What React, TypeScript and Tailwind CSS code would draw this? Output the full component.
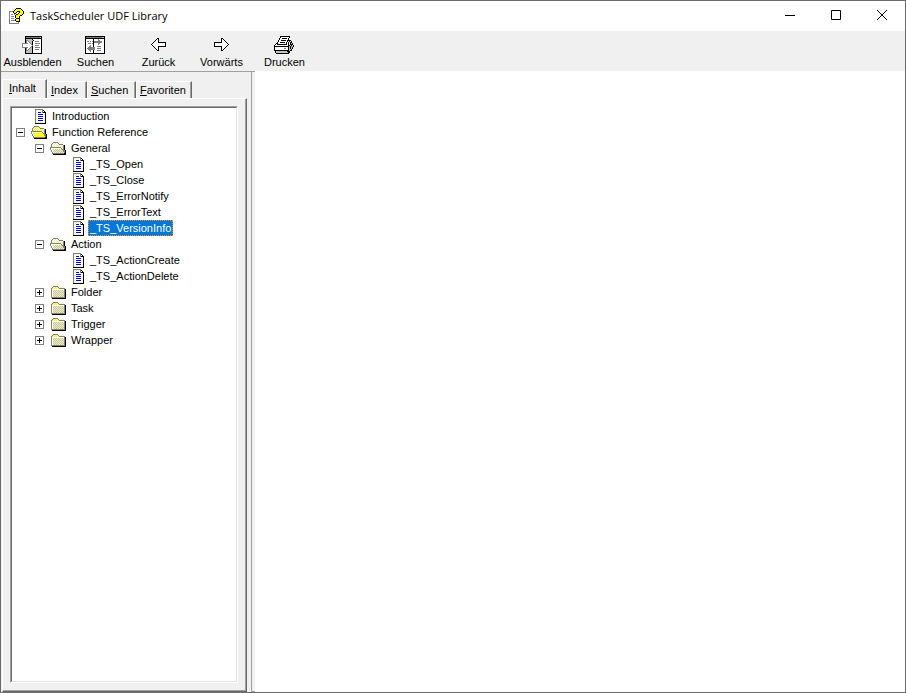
import type { ReactNode } from "react";

const PALETTE: Record<string, string> = {
  k: "#000000",
  g: "#808080",
  s: "#c0c0c0",
  w: "#ffffff",
  y: "#ffff00",
  b: "#0000ff",
  c: "#f4f4a0",
};

function PixelIcon({ rows }: { rows: string[] }) {
  const width = Math.max(...rows.map((r) => r.length));
  return (
    <svg
      width={width}
      height={rows.length}
      viewBox={`0 0 ${width} ${rows.length}`}
      shapeRendering="crispEdges"
      className="block shrink-0"
      aria-hidden="true"
    >
      {rows.flatMap((row, y) =>
        [...row].map((c, x) =>
          PALETTE[c] ? <rect key={`${x}-${y}`} x={x} y={y} width="1" height="1" fill={PALETTE[c]} /> : null,
        ),
      )}
    </svg>
  );
}

const PAGE = [
  "gggggggg....",
  "gcwcwcwgk...",
  "gwwwwwwgwk..",
  "gcwbbbwgkkk.",
  "gwwwwwwwwwk.",
  "gcwbbbbbwck.",
  "gwwwwwwwwwk.",
  "gcwbbbbbwck.",
  "gwwwwwwwwwk.",
  "gcwbbbbbwck.",
  "gwwwwwwwwwk.",
  "gcwbbbbbwck.",
  "gwwwwwwwwwk.",
  "gcwcwcwcwck.",
  "kkkkkkkkkkk.",
];

const FOLDER = [
  "..ggggg........",
  ".gywywyg.......",
  "gywywywygggggg.",
  "gwwwwwwwwwwwwgk",
  "gwcscscscscscgk",
  "gwscscscscscsgk",
  "gwcscscscscscgk",
  "gwscscscscscsgk",
  "gwcscscscscscgk",
  "gwscscscscscsgk",
  "gwcscscscscscgk",
  "ggggggggggggggk",
  ".kkkkkkkkkkkkkk",
];

const OPEN_FOLDER = [
  "...ggggg........",
  "..gcwcwcg.......",
  ".gcwcwcwcgggg...",
  ".gwcwcwcwcwcwgk.",
  ".gcwcwcwcwcwcgk.",
  "gggggggggggwcgk.",
  "gwwwwwwwwwwgwgk.",
  "gwcscscscscsggk.",
  ".gwcscscscscsggk",
  ".gwscscscscscggk",
  "..gwscscscscscgk",
  "..ggggggggggggkk",
  "...kkkkkkkkkkkkk",
];

const BRIGHT_FOLDER = OPEN_FOLDER.map((r) => r.replace(/[sc]/g, "y"));

const HELP = [
  ".......kkkkk...",
  "......kyyyyyk..",
  ".....kyyyyyyyk.",
  "ggggkyyykkkyyyk",
  "gwwwkyyk..kyyyk",
  "gwwwwkk..kyyyyk",
  "gwggwgwkkyyyyk.",
  "gwwwwwkyyyykk..",
  "gwgggwkyyyk....",
  "gwwwwwkyyyk....",
  "gwgggwwkkkk....",
  "gwwwwwkyyyk....",
  "gwggggkyyyk....",
  "gwwwwwwkkkk....",
  "gwwwwwwwwg.....",
  "gggggggggg.....",
];

const HIDE = [
  "...kkkkkkkkkkkkkkkkk",
  "...kggggggggggggggsk",
  "...kkkkkkkkkkkkkkkkk",
  "...ksssssskwwwwwwwwk",
  "...kggssssskwwwwwwwk",
  "...kgwgssskwwggggwwk",
  "...kgwwgsskwwwwwwwwk",
  "ggggggwwgskwwgggggwk",
  "gwwwwwwwwgkwwwwwwwwk",
  "gwwwwwwwwwgwwggggwwk",
  "gwwwwwwwwgkwwwwwwwwk",
  "ggggggwwgskwwgggggwk",
  "...kgwwgsskwwwwwwwwk",
  "...kgwgssskwwggggwwk",
  "...kggsssskwwwwwwwwk",
  "...ksssssskwwwwwwwwk",
  "...ksssssskwwwwwwwwk",
  "...kkkkkkkkkkkkkkkkk",
];

const SYNC = [
  "kkkkkkkkkkkkkkkkkkkk",
  "kggggggggggggggggssk",
  "kkkkkkkkkkkkkkkkkkkk",
  "kwwwwwwwkwwwwgwwwwwk",
  "kwwwwwwwkwwwwggwwwwk",
  "kwggwgwgkggggggggwwk",
  "kwwwwwwwkggggggggwwk",
  "kwwgggwgkwwwwggwwwwk",
  "kwwwwwwwkwwwwgwwwwwk",
  "kwwwwgwwkwwwwwwwwwwk",
  "kwwwggwwkwwwggggwwwk",
  "kwwgggggggwwwwwwwwwk",
  "kwggggggggwwggggwwwk",
  "kwwgggggggwwwwwwwwwk",
  "kwwwggwwkwwwggggwwwk",
  "kwwwwgwwkwwwwwwwwwwk",
  "kwwwwwwwkwwwwwwwwwwk",
  "kkkkkkkkkkkkkkkkkkkk",
];

const BACK = [
  "......kk.......",
  ".....kwk.......",
  "....kwwk.......",
  "...kwwwk.......",
  "..kwwwwkkkkkkkk",
  ".kwwwwwwwwwwwwk",
  "kwwwwwwwwwwwwwk",
  ".kwwwwwwwwwwwwk",
  "..kwwwwkkkkkkkk",
  "...kwwwk.......",
  "....kwwk.......",
  ".....kwk.......",
  "......kk.......",
];

const FORWARD = BACK.map((r) => [...r].reverse().join(""));

const PRINT = [
  "......kkkkkkkkkk....",
  "......kwwwwwwwwk....",
  ".....kwwkkkkkwk.....",
  ".....kwwwwwwwwk.....",
  "....kwwkkkkkwkkkk...",
  "....kwwwwwwwwkwkwk..",
  "...kwwkkkkkwkwkwkk..",
  "..kkwwwwwwwwkwkwksk.",
  ".kwkkkkkkkkkkwkwkkk.",
  "kwwwwwwwwwwwwwkksksk",
  "kkkkkkkkkkkkkkkskssk",
  "kwwwwwwwwwwwwwksksk.",
  "kwwwwwwwwwggwwksksk.",
  "kwwwwwwwwwwwwwkssk..",
  "kkkkkkkkkkkkkkkskk..",
  ".kssssssssssskkk....",
  ".ksssssssssssskk....",
  "..kkkkkkkkkkkkk.....",
];

type Node = { label: string; level: number; kind: "page" | "folder" | "open" | "bright"; selected?: boolean };

const NODES: Node[] = [
  { label: "Introduction", level: 0, kind: "page" },
  { label: "Function Reference", level: 0, kind: "bright" },
  { label: "General", level: 1, kind: "open" },
  { label: "_TS_Open", level: 2, kind: "page" },
  { label: "_TS_Close", level: 2, kind: "page" },
  { label: "_TS_ErrorNotify", level: 2, kind: "page" },
  { label: "_TS_ErrorText", level: 2, kind: "page" },
  { label: "_TS_VersionInfo", level: 2, kind: "page", selected: true },
  { label: "Action", level: 1, kind: "open" },
  { label: "_TS_ActionCreate", level: 2, kind: "page" },
  { label: "_TS_ActionDelete", level: 2, kind: "page" },
  { label: "Folder", level: 1, kind: "folder" },
  { label: "Task", level: 1, kind: "folder" },
  { label: "Trigger", level: 1, kind: "folder" },
  { label: "Wrapper", level: 1, kind: "folder" },
];

const INDENT = ["pl-1", "pl-[23px]", "pl-[42px]"];
const ICONS = { page: PAGE, folder: FOLDER, open: OPEN_FOLDER, bright: BRIGHT_FOLDER };

function TreeRow({ node }: { node: Node }) {
  const expanded = node.kind !== "folder";
  return (
    <li
      role="treeitem"
      aria-selected={!!node.selected}
      aria-expanded={node.kind === "page" ? undefined : expanded}
      className={`flex h-4 items-center ${INDENT[node.level]}`}
    >
      {node.kind === "page" ? (
        <span className="w-[9px]" />
      ) : (
        <button type="button" aria-label={`${expanded ? "Collapse" : "Expand"} ${node.label}`}>
          <svg width="9" height="9" viewBox="0 0 9 9" shapeRendering="crispEdges" className="block">
            <path d="M0.5 0.5h8v8h-8z" fill="#fff" stroke="#808080" />
            <path d={expanded ? "M2 4.5h5" : "M2 4.5h5M4.5 2v5"} stroke="#000" />
          </svg>
        </button>
      )}
      <span className="ml-1.5 flex w-[19px] justify-start">
        <span className={node.kind === "page" ? "pl-1" : node.kind === "folder" ? "pl-px" : ""}>
          <PixelIcon rows={ICONS[node.kind]} />
        </span>
      </span>
      <button
        type="button"
        className={`h-4 px-0.5 leading-4 whitespace-nowrap ${
          node.selected
            ? "bg-[#0078d7] text-white outline-1 -outline-offset-1 outline-dotted outline-[#ff8728]"
            : ""
        }`}
      >
        {node.label}
      </button>
    </li>
  );
}

function ToolButton({ label, rows }: { label: string; rows: string[] }) {
  return (
    <button type="button" className="flex w-[63px] flex-col items-center justify-start pb-px">
      <span className="flex h-[23px] items-center pt-1 pr-px">
        <PixelIcon rows={rows} />
      </span>
      <span className="leading-4">{label}</span>
    </button>
  );
}

function Tab({ label, width, active }: { label: string; width: string; active?: boolean }) {
  return (
    <button
      type="button"
      role="tab"
      aria-selected={!!active}
      className={`flex border-t border-r border-l border-t-white border-r-[#696969] border-l-white bg-[#f0f0f0] leading-4 shadow-[inset_-1px_0_0_#a0a0a0] ${width} ${
        active ? "-mb-px h-5 pl-1.5" : "h-[17px] pl-[3px]"
      }`}
    >
      <span>
        <u className="underline-offset-1">{label[0]}</u>
        {label.slice(1)}
      </span>
    </button>
  );
}

function CaptionButton({ label, children }: { label: string; children: ReactNode }) {
  return (
    <button type="button" aria-label={label} className="flex w-[46px] items-center justify-center pb-px pl-px">
      <svg width="11" height="11" viewBox="0 0 11 11" fill="none" stroke="#000">
        {children}
      </svg>
    </button>
  );
}

export default function App() {
  return (
    <div className="flex h-screen flex-col border border-[#6b6b6b] bg-white font-['Liberation_Sans',Arial,sans-serif] text-[11px] text-black">
      <header className="flex h-[30px] shrink-0 justify-between">
        <div className="flex items-center gap-1.5 pb-px pl-2">
          <PixelIcon rows={HELP} />
          <h1 className="font-['Open_Sans','Noto_Sans',sans-serif] text-[11px] leading-4">TaskScheduler UDF Library</h1>
        </div>
        <div className="flex">
          <CaptionButton label="Minimize">
            <path d="M0 5.5h10" />
          </CaptionButton>
          <CaptionButton label="Maximize">
            <path d="M0.5 0.5h9v9h-9z" />
          </CaptionButton>
          <CaptionButton label="Close">
            <path d="M0 0l10 10M10 0l-10 10" />
          </CaptionButton>
        </div>
      </header>

      <nav className="flex h-10 shrink-0 bg-[#f0f0f0]" aria-label="Toolbar">
        <ToolButton label="Ausblenden" rows={HIDE} />
        <ToolButton label="Suchen" rows={SYNC} />
        <ToolButton label="Zurück" rows={BACK} />
        <ToolButton label="Vorwärts" rows={FORWARD} />
        <ToolButton label="Drucken" rows={PRINT} />
      </nav>

      <div className="flex min-h-0 flex-1">
        <aside className="flex w-[254px] shrink-0 border-t border-[#a0a0a0] bg-[#f0f0f0]">
          <div className="flex flex-1 flex-col pl-px">
            <div className="flex h-[26px] shrink-0 items-end" role="tablist">
              <Tab label="Inhalt" width="w-[45px]" active />
              <Tab label="Index" width="w-10" />
              <Tab label="Suchen" width="w-[49px]" />
              <Tab label="Favoriten" width="w-[56px]" />
            </div>
            <div className="flex min-h-0 flex-1 flex-col border-t border-r border-b border-l border-t-white border-r-[#696969] border-b-[#696969] border-l-white p-[7px] pr-2 pb-2 shadow-[inset_-1px_-1px_0_#a0a0a0]">
              <div className="flex min-h-0 flex-1 border border-t-[#a0a0a0] border-r-white border-b-white border-l-[#a0a0a0]">
                <ul
                  role="tree"
                  className="flex-1 overflow-hidden border border-t-[#696969] border-r-[#e3e3e3] border-b-[#e3e3e3] border-l-[#696969] bg-white"
                >
                  {NODES.map((n) => (
                    <TreeRow key={n.label} node={n} />
                  ))}
                </ul>
              </div>
            </div>
          </div>
          <div className="ml-1 w-1 border-b border-l border-[#a0a0a0]" />
        </aside>
        <main className="flex-1 bg-white" />
      </div>
    </div>
  );
}
